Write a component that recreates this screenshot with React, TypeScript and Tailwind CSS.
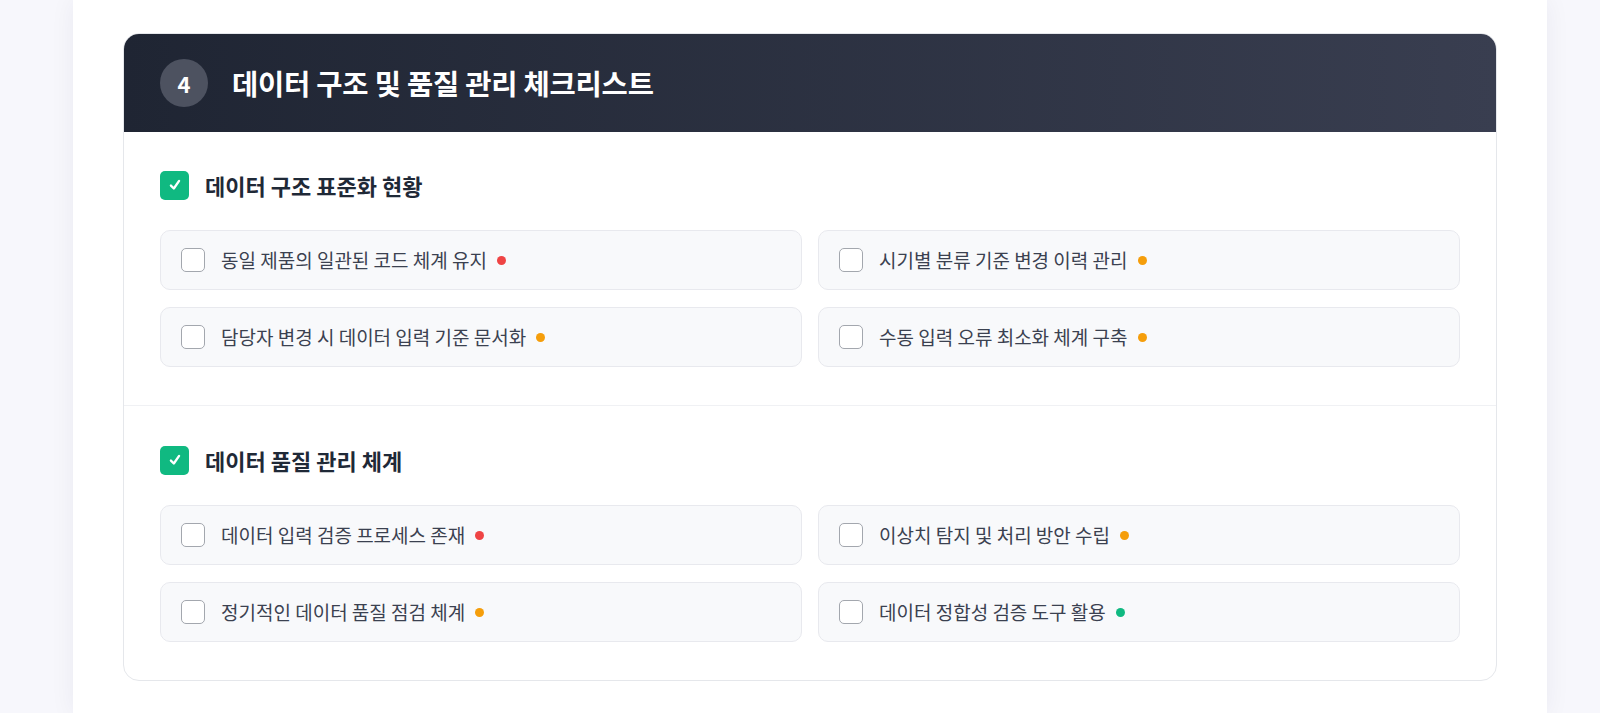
import React from "react";

type Item = { text: string; level: "high" | "mid" | "low" };

const sections: { title: string; items: Item[] }[] = [
  {
    title: "데이터 구조 표준화 현황",
    items: [
      { text: "동일 제품의 일관된 코드 체계 유지", level: "high" },
      { text: "시기별 분류 기준 변경 이력 관리", level: "mid" },
      { text: "담당자 변경 시 데이터 입력 기준 문서화", level: "mid" },
      { text: "수동 입력 오류 최소화 체계 구축", level: "mid" },
    ],
  },
  {
    title: "데이터 품질 관리 체계",
    items: [
      { text: "데이터 입력 검증 프로세스 존재", level: "high" },
      { text: "이상치 탐지 및 처리 방안 수립", level: "mid" },
      { text: "정기적인 데이터 품질 점검 체계", level: "mid" },
      { text: "데이터 정합성 검증 도구 활용", level: "low" },
    ],
  },
];

function Dot({ level }: { level: Item["level"] }) {
  const cls =
    level === "high"
      ? "bg-[#ef4444]"
      : level === "mid"
      ? "bg-[#f59e0b]"
      : "bg-[#10b981]";
  return <span className={`inline-block w-[9px] h-[9px] rounded-full ${cls}`} />;
}

export default function App() {
  return (
    <div
      className="min-h-[713px] bg-[#f7f7fc] flex"
      style={{ fontFamily: '"Noto Sans CJK KR", "Noto Sans", sans-serif' }}
    >
      <div className="ml-[73px] w-[1474px] bg-white shadow-[0_0_24px_rgba(30,30,60,0.06)] px-[50px] pt-[33px] pb-[34px]">
        <div className="rounded-2xl border border-[#e5e7eb] overflow-hidden bg-white">
          <div className="flex items-center gap-6 px-9 py-[25px] bg-gradient-to-r from-[#1f2533] to-[#393e50]">
            <div className="w-12 h-12 rounded-full bg-[#4d5260] flex items-center justify-center text-white text-[22px] font-bold">
              4
            </div>
            <h2 className="text-white text-[28.5px] font-bold leading-none tracking-[-0.2px]">
              데이터 구조 및 품질 관리 체크리스트
            </h2>
          </div>
          {sections.map((s, i) => (
            <div
              key={s.title}
              className={`px-9 ${i === 0 ? "pt-[38px] pb-[38px] border-b border-[#f0f1f4]" : "pt-[39px] pb-[38px]"}`}
            >
              <div className="flex items-center gap-4 h-[30px]">
                <span className="w-[29px] h-[29px] rounded-[5px] bg-[#10b981] flex items-center justify-center">
                  <svg width="14" height="14" viewBox="0 0 24 24" fill="none" stroke="white" strokeWidth="4" strokeLinecap="round" strokeLinejoin="round">
                    <polyline points="5 13 10 18 19 5" />
                  </svg>
                </span>
                <h3 className="text-[22px] font-bold text-[#1f2937] leading-none">{s.title}</h3>
              </div>
              <div className="grid grid-cols-2 gap-x-4 gap-y-[17px] mt-[30px]">
                {s.items.map((it) => (
                  <div
                    key={it.text}
                    className="h-[60px] flex items-center gap-4 px-5 rounded-[10px] border border-[#e8e9ee] bg-[#f8f9fb]"
                  >
                    <span className="w-[24px] h-[24px] rounded-[5px] border-[1.5px] border-[#a3a7ae] bg-white shrink-0" />
                    <span className="flex items-center gap-[10px] text-[19px] text-[#3b4150]">
                      {it.text}
                      <Dot level={it.level} />
                    </span>
                  </div>
                ))}
              </div>
            </div>
          ))}
        </div>
      </div>
    </div>
  );
}
